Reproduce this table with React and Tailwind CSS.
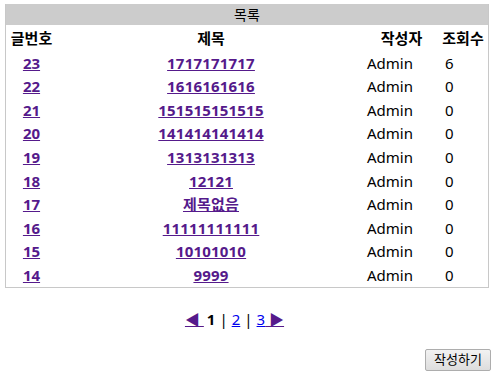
const posts = [
  { no: 23, title: "1717171717", writer: "Admin", hits: 6 },
  { no: 22, title: "1616161616", writer: "Admin", hits: 0 },
  { no: 21, title: "151515151515", writer: "Admin", hits: 0 },
  { no: 20, title: "141414141414", writer: "Admin", hits: 0 },
  { no: 19, title: "1313131313", writer: "Admin", hits: 0 },
  { no: 18, title: "12121", writer: "Admin", hits: 0 },
  { no: 17, title: "제목없음", writer: "Admin", hits: 0 },
  { no: 16, title: "11111111111", writer: "Admin", hits: 0 },
  { no: 15, title: "10101010", writer: "Admin", hits: 0 },
  { no: 14, title: "9999", writer: "Admin", hits: 0 },
];

const cols = "grid grid-cols-[51px_308px_73px_50px]";

const BoardList = () => {
  return (
    <div className="ml-[5px] mt-[4px] w-[484px] border border-[#c8c8c8] border-t-0">
      <div className="flex h-[21px] items-center justify-center bg-[#cccccc] text-[14px] text-black">목록</div>

      <div className={`${cols} h-[26px] items-center text-[15px] font-bold text-black`}>
        <div className="text-center">글번호</div>
        <div className="text-center">제목</div>
        <div className="text-center">작성자</div>
        <div className="text-center">조회수</div>
      </div>

      {posts.map((post) => (
        <div key={post.no} className={`${cols} h-[23.6px] items-center text-[15px] text-black`}>
          <div className="text-center">
            <a href="#" className="font-bold text-[#551a8b] underline">
              {post.no}
            </a>
          </div>
          <div className="text-center">
            <a href="#" className="font-bold tracking-[0.2px] text-[#551a8b] underline">
              {post.title}
            </a>
          </div>
          <div className="pl-[2px]">{post.writer}</div>
          <div className="pl-[7px]">{post.hits}</div>
        </div>
      ))}
    </div>
  );
};

const Pager = () => {
  return (
    <div className="mt-[20px] flex h-[22px] items-center justify-center pr-[31px] text-[15px] text-black">
      <a href="#" className="text-[#551a8b] underline">
        ◀&nbsp;
      </a>
      <b className="ml-[3px]">1</b>
      <span className="mx-[4px]">|</span>
      <a href="#" className="text-[#0000ee] underline">2</a>
      <span className="mx-[4px]">|</span>
      <a href="#" className="text-[#0000ee] underline">3</a>
      <a href="#" className="text-[#551a8b] underline">
        &nbsp;▶
      </a>
    </div>
  );
};

export default function App() {
  return (
    <div className="h-[381px] w-[500px] bg-white font-['Noto_Sans','Noto_Sans_CJK_KR',sans-serif]">
      <BoardList />
      <Pager />
      <div className="mt-[19px] flex justify-end pr-[9px]">
        <button
          type="button"
          className="h-[22px] w-[66px] rounded-[2px] border border-[#adadad] bg-gradient-to-b from-[#f2f2f2] to-[#dddddd] text-[13px] text-black"
        >
          작성하기
        </button>
      </div>
    </div>
  );
}
